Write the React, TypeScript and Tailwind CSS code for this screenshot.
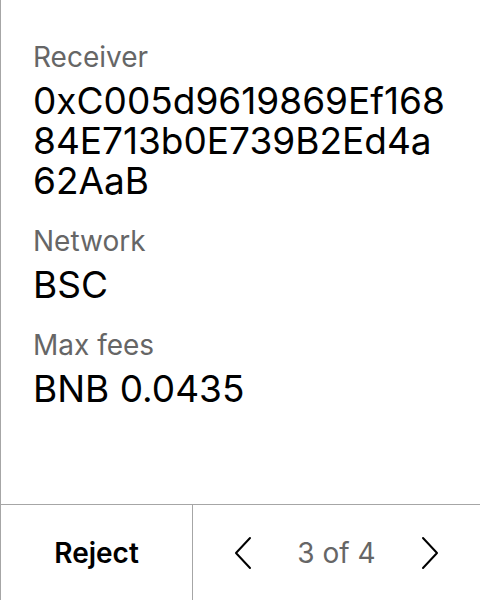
import React from 'react';

const Field: React.FC<{ label: string; lines: string[] }> = ({ label, lines }) => (
  <div className="flex flex-col gap-[7px]">
    <span className="text-[28px] leading-[34px] text-[#666666]">{label}</span>
    <p className="text-[37px] leading-[40px] text-black">
      {lines.map((l, i) => (
        <React.Fragment key={l}>
          {i > 0 && <br />}
          {l}
        </React.Fragment>
      ))}
    </p>
  </div>
);

const Chevron: React.FC<{ dir: 'left' | 'right' }> = ({ dir }) => (
  <svg width="20" height="34" viewBox="0 0 20 34" fill="none" stroke="black" strokeWidth="2" strokeLinecap="round" strokeLinejoin="round">
    {dir === 'left' ? <path d="M17 2 L3 17 L17 32" /> : <path d="M3 2 L17 17 L3 32" />}
  </svg>
);

export default function App() {
  return (
    <div className="w-[480px] h-[600px] bg-white flex flex-col border-l border-[#a6a6a6]" style={{ fontFamily: 'Inter, "Noto Sans", sans-serif' }}>
      <div className="flex-1 flex flex-col gap-[23px] pl-[32px] pr-[20px] pt-[40px]">
        <Field label="Receiver" lines={['0xC005d9619869Ef168', '84E713b0E739B2Ed4a', '62AaB']} />
        <Field label="Network" lines={['BSC']} />
        <Field label="Max fees" lines={['BNB 0.0435']} />
      </div>
      <div className="h-[96px] flex border-t border-[#a6a6a6]">
        <div className="w-[192px] flex items-center justify-center border-r border-[#a6a6a6]">
          <span className="text-[28px] font-semibold text-black">Reject</span>
        </div>
        <div className="flex-1 flex items-center justify-between pl-[40px] pr-[40px]">
          <Chevron dir="left" />
          <span className="text-[28px] text-[#666666]">3 of 4</span>
          <Chevron dir="right" />
        </div>
      </div>
    </div>
  );
}
